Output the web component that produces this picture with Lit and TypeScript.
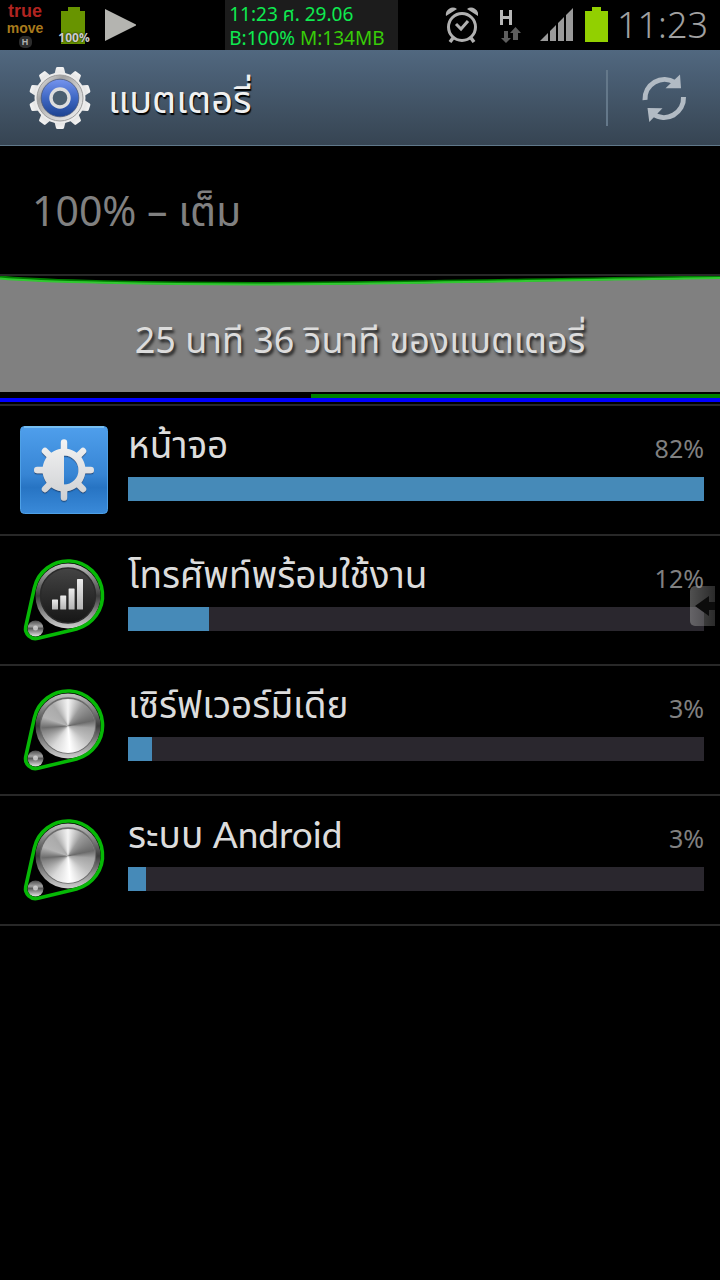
import { LitElement, html, svg, css } from "lit";
import { customElement, property } from "lit/decorators.js";

const spokes = (count: number) =>
  Array.from({ length: count }, (_, i) => (360 / count) * i);

const gearIcon = () => svg`
  <svg class="gear" viewBox="0 0 64 64" aria-hidden="true">
    <defs>
      <linearGradient id="metal" x1="0" y1="0" x2="0" y2="1">
        <stop offset="0" stop-color="#f4f4f4" /><stop offset="1" stop-color="#dcdcdc" />
      </linearGradient>
      <linearGradient id="rim" x1="0" y1="0" x2="1" y2="1">
        <stop offset="0" stop-color="#f4f4f4" /><stop offset=".3" stop-color="#a2a2a2" />
        <stop offset=".55" stop-color="#c9c9c9" /><stop offset="1" stop-color="#f2f2f2" />
      </linearGradient>
      <linearGradient id="blue" x1="0" y1="0" x2="0" y2="1">
        <stop offset="0" stop-color="#7594ee" /><stop offset=".5" stop-color="#3f68c4" />
        <stop offset="1" stop-color="#1c4290" />
      </linearGradient>
    </defs>
    ${spokes(10).map(
      (a) => svg`<path d="M26 10 L28 2 Q28.300 1 29.500 1 H34.500 Q35.700 1 36 2 L38 10Z"
        fill="url(#metal)" transform="rotate(${a} 32 32)" />`
    )}
    <circle cx="32" cy="32" r="25.500" fill="#ececec" />
    <circle cx="32" cy="32" r="23" fill="url(#rim)" stroke="#9c9c9c" stroke-width="1" />
    <circle cx="32" cy="32" r="18.800" fill="url(#blue)" stroke="#4a5878" stroke-width=".8" />
    <circle cx="32" cy="32" r="9" fill="#4b5f70" stroke="#dedede" stroke-width="3.400" />
  </svg>`;

const displayIcon = () => svg`
  <svg class="icon" viewBox="0 0 88 88" aria-hidden="true">
    <defs>
      <linearGradient id="tile" x1="0" y1="0" x2="0" y2="1">
        <stop offset="0" stop-color="#4f9fec" /><stop offset=".55" stop-color="#3785d4" />
        <stop offset=".7" stop-color="#2774c3" /><stop offset="1" stop-color="#3a8ad9" />
      </linearGradient>
      <linearGradient id="sun" gradientUnits="userSpaceOnUse" x1="0" y1="14" x2="0" y2="76">
        <stop offset="0" stop-color="#f3f3f3" /><stop offset="1" stop-color="#cdcfd2" />
      </linearGradient>
      <filter id="drop" x="-10%" y="-10%" width="120%" height="125%">
        <feDropShadow dx="0" dy="1.2" stdDeviation=".6" flood-color="#123c6b" flood-opacity=".8" />
      </filter>
    </defs>
    <rect x=".5" y=".5" width="87" height="87" rx="4" fill="url(#tile)" stroke="#4ea0e6" />
    <path d="M4 1H84" stroke="#85c8f4" stroke-width="1.500" />
    <g filter="url(#drop)">
      <g stroke="url(#sun)" stroke-width="6.400" stroke-linecap="round">
        <path d="M44.010 16.500L44 26M44.010 71.500L44 62M17.200 44.010L26 44" />
        <path d="M62 44L70.800 44.010" />
        <path d="M25 25L30 30M63 25L58 30M25 63L30 58M63 63L58 58" />
      </g>
      <path fill-rule="evenodd" fill="url(#sun)"
        d="M44 22.500A21.500 21.500 0 1 1 43.990 22.500ZM44 29.500V58.500A14.500 14.500 0 0 0 44 29.500Z" />
    </g>
  </svg>`;

const knobIcon = (signal: boolean) => svg`
  <svg class="icon" viewBox="0 -1 88 88" aria-hidden="true">
    <defs>
      <linearGradient id="ring" x1="0" y1="0" x2="0" y2="1">
        <stop offset="0" stop-color="#c4c4c4" /><stop offset=".28" stop-color="#777" />
        <stop offset=".5" stop-color="#3c3c3c" /><stop offset=".75" stop-color="#8a8a8a" />
        <stop offset="1" stop-color="#cfcfcf" />
      </linearGradient>
      <linearGradient id="dark" x1="0" y1="0" x2="0" y2="1">
        <stop offset="0" stop-color="#444" /><stop offset="1" stop-color="#161616" />
      </linearGradient>
      <linearGradient id="bars" x1="0" y1="0" x2="0" y2="1">
        <stop offset="0" stop-color="#ececec" /><stop offset="1" stop-color="#b4b4b4" />
      </linearGradient>
      <linearGradient id="stud" x1="0" y1="0" x2="0" y2="1">
        <stop offset="0" stop-color="#4c4c4c" /><stop offset=".35" stop-color="#a0a0a0" />
        <stop offset=".5" stop-color="#5c5c5c" /><stop offset="1" stop-color="#e6e6e6" />
      </linearGradient>
    </defs>
    <circle cx="48" cy="39" r="32.500" fill="url(#ring)" />
    <circle cx="48" cy="38.500" r="27.500" fill="${signal ? "url(#dark)" : "#999"}"
      stroke="${signal ? "#2a2a2a" : "#6a6a6a"}" stroke-width="1.400" />
    ${signal
      ? svg`<g fill="url(#bars)">
          <rect x="32" y="42.500" width="6" height="10" rx=".6" />
          <rect x="40.200" y="38.500" width="6" height="14" rx=".6" />
          <rect x="48.600" y="31.500" width="6" height="21" rx=".6" />
          <rect x="57" y="22" width="6" height="30.500" rx=".6" />
        </g>`
      : svg`<foreignObject x="21" y="11.500" width="54" height="54">
          <div class="disc"></div>
        </foreignObject>`}
    <circle cx="15.500" cy="71.500" r="8" fill="url(#stud)" />
    <circle cx="15.500" cy="71" r="2.500" fill="#d8d8d8" opacity=".8" />
    <path d="M5.700 69.900L14.300 31.100A34.500 34.500 0 1 1 56.500 71.900L18 81.300A10 10 0 0 1 5.700 69.900Z"
      fill="none" stroke="#06b806" stroke-width="3.600" />
  </svg>`;

@customElement("status-bar")
class StatusBar extends LitElement {
  static styles = css`
    :host {
      display: grid;
      grid-template-columns: minmax(0, 7fr) auto minmax(0, 10fr);
      height: 50px;
      background: #000;
      font-family: "Noto Sans", "Noto Sans Thai", sans-serif;
    }
    .left,
    .right {
      display: flex;
      align-items: center;
    }
    .left {
      padding-left: 4px;
      gap: 12px;
    }
    .right {
      justify-content: flex-end;
      padding-right: 12px;
      gap: 8px;
    }
    .carrier {
      display: flex;
      flex-direction: column;
      align-items: center;
      width: 42px;
      font: 700 18px/17px "Liberation Sans", sans-serif;
      color: #b02420;
    }
    .move {
      font-size: 14px;
      line-height: 16px;
      color: #a87a1c;
    }
    .h {
      width: 13px;
      border-radius: 5px;
      background: #2c2c2c;
      color: #b0b0b0;
      font-size: 9px;
      line-height: 12px;
      text-align: center;
    }
    .charge {
      display: grid;
      width: 32px;
      justify-items: center;
    }
    .charge > * {
      grid-area: 1 / 1;
    }
    .charge span {
      align-self: end;
      font: 700 12px/12px "Open Sans", sans-serif;
      color: #ccc;
      text-shadow: 0 0 2px #000;
    }
    .monitor {
      width: 169px;
      padding: 2px 0 0 4px;
      background: #1c1c1c;
      font-size: 19px;
      line-height: 24px;
      color: #0fea50;
      white-space: nowrap;
    }
    .memory {
      color: #38cc08;
    }
    .clock {
      font-size: 36px;
      line-height: 50px;
      color: #a0a0a0;
      font-weight: 300;
    }
    svg {
      display: block;
      flex: none;
    }
  `;

  render() {
    return html`
      <div class="left">
        <div class="carrier">
          <span>true</span><span class="move">move</span><span class="h">H</span>
        </div>
        <div class="charge">
          <svg width="26" height="38" viewBox="0 0 26 38" aria-hidden="true">
            <path d="M7 1H19V5H24V38H0V5H7Z" fill="#689400" />
          </svg>
          <span>100%</span>
        </div>
        <svg width="34" height="34" viewBox="0 0 34 34" aria-hidden="true">
          <path d="M3 1L35 17L3 33Z" fill="#b4b4b0" />
        </svg>
      </div>
      <div class="monitor">
        <div>11:23 ศ. 29.06</div>
        <div>B:100% <span class="memory">M:134MB</span></div>
      </div>
      <div class="right">
        <svg width="34" height="36" viewBox="-1 0 34 36" aria-hidden="true">
          <g fill="none" stroke="#b0b0b0">
            <circle cx="17" cy="20" r="13.500" stroke-width="3" />
            <path d="M11 17L16 22L23 14" stroke-width="3" />
            <path d="M8 31L5 35M26 31L29 35" stroke-width="3.500" />
          </g>
          <path d="M1 9A7 7 0 0 1 12 2ZM33 9A7 7 0 0 0 22 2Z" fill="#b0b0b0" />
        </svg>
        <svg width="45" height="36" viewBox="-1 0 45 36" aria-hidden="true">
          <path d="M14.500 3V18M23.500 3V18M14.500 10.500H23.500" stroke="#b8b8b8" stroke-width="3" />
          <path d="M17 24H21V31H24L19 36L14 31H17ZM26 33V26H23L28.500 20L34 26H31V33Z" fill="#5e5e5e" />
        </svg>
        <svg width="34" height="34" viewBox="-1 0 34 34" aria-hidden="true">
          <path d="M0 33L8 25V33ZM10 33V23L16 17V33ZM18 33V15L24 9V33ZM26 33V7L33 0V33Z" fill="#9a9a9a" />
        </svg>
        <svg width="28" height="36" viewBox="-1 0 28 36" aria-hidden="true">
          <path d="M10 0H19V4H26V35H3V4H10Z" fill="#92d000" />
        </svg>
        <time class="clock">11:23</time>
      </div>
    `;
  }
}

@customElement("usage-row")
class UsageRow extends LitElement {
  @property() label = "";
  @property() icon = "knob";
  @property({ type: Number }) percent = 0;
  @property({ type: Number }) fill = 0;

  static styles = css`
    :host {
      display: block;
      border-bottom: 2px solid #282828;
    }
    .row {
      display: flex;
      gap: 20px;
      width: 100%;
      height: 128px;
      padding: 20px 16px 20px 20px;
      border: 0;
      background: none;
      color: #dcdcdc;
      font-family: inherit;
      text-align: left;
    }
    .icon {
      display: block;
      flex: none;
      width: 88px;
      height: 88px;
    }
    .disc {
      width: 54px;
      height: 54px;
      border-radius: 50%;
      background: conic-gradient(
        from 0deg,
        #f4f4f4 0deg,
        #9a9a9a 35deg,
        #6a6a6a 78deg,
        #a4a4a4 95deg,
        #bdbdbd 125deg,
        #fff 175deg,
        #d8d8d8 215deg,
        #858585 258deg,
        #6c6c6c 266deg,
        #b4b4b4 290deg,
        #aaa 325deg,
        #f4f4f4 360deg
      );
    }
    .body {
      flex: 1;
      min-width: 0;
    }
    .text {
      display: flex;
      justify-content: space-between;
      align-items: baseline;
      height: 51px;
      line-height: 36px;
      white-space: nowrap;
    }
    .label {
      font-family: Lato, "Noto Sans Thai", sans-serif;
      font-size: 37px;
    }
    .percent {
      font-size: 25px;
      color: #808080;
    }
    .track {
      display: block;
      height: 24px;
      background: #2a272e;
    }
    .bar {
      display: block;
      height: 100%;
      background: #468ab8;
    }
  `;

  render() {
    return html`
      <button class="row" type="button">
        ${this.icon === "display" ? displayIcon() : knobIcon(this.icon === "signal")}
        <span class="body">
          <span class="text">
            <span class="label">${this.label}</span>
            <span class="percent">${this.percent}%</span>
          </span>
          <span class="track"><span class="bar" style="width:${this.fill}%"></span></span>
        </span>
      </button>
    `;
  }
}

@customElement("app-root")
class AppRoot extends LitElement {
  static styles = css`
    :host {
      display: block;
      position: relative;
      min-height: 100vh;
      background: #000;
      color: #dcdcdc;
      font-family: "Noto Sans", "Noto Sans Thai", sans-serif;
    }
    .header {
      display: flex;
      align-items: center;
      height: 96px;
      box-sizing: border-box;
      padding-left: 28px;
      border-bottom: 1px solid #60788a;
      background: linear-gradient(#516880, #364452);
    }
    .gear {
      width: 64px;
      height: 64px;
      flex: none;
    }
    .title {
      flex: 1;
      margin: 0 0 0 16px;
      font-size: 38px;
      font-weight: 400;
      line-height: 56px;
      color: #f0f0f0;
      text-shadow: 1px 2px 1px #000;
    }
    .refresh {
      display: grid;
      place-items: center;
      width: 114px;
      height: 56px;
      padding: 0;
      border: 0;
      border-left: 2px solid #64788a;
      background: none;
    }
    .level {
      height: 128px;
      padding: 0 32px;
      border-bottom: 2px solid #282828;
      font-size: 41px;
      line-height: 128px;
      color: #808080;
    }
    .history {
      display: block;
      width: 100%;
      padding: 0;
      border: 0;
      border-bottom: 2px solid #282828;
      background: #000;
      color: inherit;
      font-family: inherit;
    }
    .chart {
      display: grid;
      height: 116px;
    }
    .chart > * {
      grid-area: 1 / 1;
    }
    .curve {
      width: 100%;
      height: 116px;
    }
    .elapsed {
      align-self: center;
      padding-top: 12px;
      font-size: 36px;
      line-height: 48px;
      text-shadow: 2px 3px 3px #222;
    }
    .charging {
      display: block;
      height: 4px;
      margin: 2px 0 0 auto;
      background: #008000;
    }
    .awake {
      display: block;
      height: 4px;
      margin-bottom: 2px;
      background: #0000ff;
    }
    .handle {
      position: absolute;
      top: 586px;
      right: 5px;
      width: 25px;
      height: 40px;
      padding: 0;
      border: 0;
      border-radius: 5px 0 0 5px;
      background: linear-gradient(90deg, #a0a0a080, #70707060);
    }
    .handle svg {
      display: block;
    }
  `;

  render() {
    return html`
      <status-bar></status-bar>
      <header class="header">
        ${gearIcon()}
        <h1 class="title">แบตเตอรี่</h1>
        <button class="refresh" type="button" aria-label="รีเฟรช">
          <svg width="48" height="50" viewBox="0 0 48 50" aria-hidden="true">
            <g fill="none" stroke="#b2bbc4" stroke-width="5">
              <path d="M5 27A19.500 19.500 0 0 1 35 9.500" />
              <path d="M43.500 24A19.500 19.500 0 0 1 13 41" />
            </g>
            <path d="M40 1.500L41 15.300H25.500ZM7.500 35L22.500 35.300L9.300 49Z" fill="#b2bbc4" />
          </svg>
        </button>
      </header>
      <main>
        <div class="level">100% – เต็ม</div>
        <button class="history" type="button">
          <span class="chart">
            <svg class="curve" viewBox="0 0 720 116" preserveAspectRatio="none" aria-hidden="true">
              <path d="M0 2C40 6 150 8.500 260 8.500S560 4 720 2V116H0Z" fill="#808080" />
              <path d="M0 1C40 5 150 7.500 260 7.500S560 3 720 1" fill="none" stroke="#008000" stroke-width="3" />
              <path d="M0 2.500C40 6 150 8.500 260 8.500S560 4 720 2" fill="none" stroke="#32c832" stroke-width="2" />
            </svg>
            <span class="elapsed">25 นาที 36 วินาที ของแบตเตอรี่</span>
          </span>
          <span class="charging" style="width:56.8%"></span>
          <span class="awake"></span>
        </button>
        <usage-row icon="display" label="หน้าจอ" percent="82" fill="100"></usage-row>
        <usage-row icon="signal" label="โทรศัพท์พร้อมใช้งาน" percent="12" fill="14"></usage-row>
        <usage-row label="เซิร์ฟเวอร์มีเดีย" percent="3" fill="4.2"></usage-row>
        <usage-row label="ระบบ Android" percent="3" fill="3.1"></usage-row>
      </main>
      <button class="handle" type="button" aria-label="เปิดแถบ">
        <svg width="25" height="40" viewBox="0 0 25 40" aria-hidden="true">
          <path d="M5 20L19 10V16H25V24H19V30Z" fill="#0c0c0c" />
        </svg>
      </button>
    `;
  }
}
